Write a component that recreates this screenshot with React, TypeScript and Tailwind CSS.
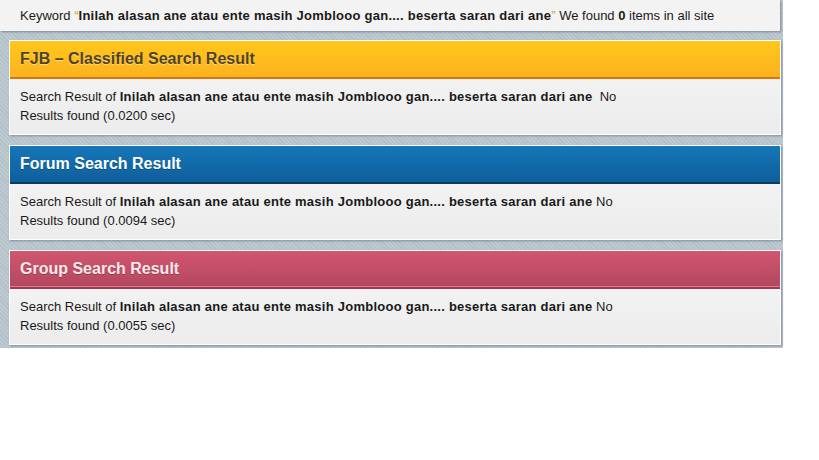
const QUERY = "Inilah alasan ane atau ente masih Jomblooo gan.... beserta saran dari ane";

type Section = {
	title: string;
	time: string;
	head: string;
	titleColor: string;
	noGap?: boolean;
};

const sections: Section[] = [
	{
		title: "FJB – Classified Search Result",
		time: "0.0200",
		head: "bg-gradient-to-b from-[#ffc71c] to-[#fdb21e] border-b-2 border-[#d6770b]",
		titleColor: "text-[#4f4426] [text-shadow:0_1px_0_rgba(255,255,255,0.45)]",
		noGap: true,
	},
	{
		title: "Forum Search Result",
		time: "0.0094",
		head: "bg-gradient-to-b from-[#1676b8] to-[#0f5f9a] border-b-2 border-[#0b3d63]",
		titleColor: "text-white [text-shadow:0_1px_0_rgba(0,0,0,0.3)]",
	},
	{
		title: "Group Search Result",
		time: "0.0055",
		head: "bg-gradient-to-b from-[#d2566f] to-[#b3475f] border-b-2 border-[#9c3a50] shadow-[inset_0_-1px_0_#e07b92]",
		titleColor: "text-[#f6e9ec] [text-shadow:0_1px_0_rgba(0,0,0,0.25)]",
	},
];

function ResultCard({ s }: { s: Section }) {
	return (
		<div className="w-[772px] border border-white shadow-[1px_1px_2px_rgba(60,80,95,0.45)]">
			<div className={`h-[38px] flex items-center px-[10px] ${s.head}`}>
				<h2 className={`text-[16px] font-bold ${s.titleColor}`}>{s.title}</h2>
			</div>
			<div className="bg-gradient-to-b from-[#f2f2f2] to-[#ececec] px-[10px] pt-[8px] pb-[9px] text-[13px] leading-[19px] text-[#1a1a1a]">
				Search Result of <b className="tracking-[0.25px]">{QUERY}</b>
				{s.noGap ? "\u00a0 No" : " No"}
				<br />
				Results found ({s.time} sec)
			</div>
		</div>
	);
}

export default function App() {
	return (
		<div className="min-h-[460px] w-[819px] bg-white font-['Liberation_Sans',Arial,sans-serif]">
			<div className="w-[783px] h-[348px] bg-[#b7c3cb] bg-[repeating-linear-gradient(45deg,#b3bfc7_0px,#b3bfc7_1px,#bdc9d1_1px,#bdc9d1_3px)]">
				<div className="w-[780px] h-[31px] bg-[#f3f3f3] shadow-[1px_1px_2px_rgba(60,80,95,0.5)] pl-[20px] flex items-center text-[13px] text-[#1a1a1a]">
					<span>
						Keyword <span className="text-[#c9a21a]">“</span>
						<b className="tracking-[0.25px]">{QUERY}</b>
						<span className="text-[#c9a21a]">”</span> We found <b>0</b> items in all site
					</span>
				</div>
				<div className="pl-[9px] pt-[9px] flex flex-col gap-[10px]">
					{sections.map((s) => (
						<ResultCard key={s.title} s={s} />
					))}
				</div>
			</div>
		</div>
	);
}
